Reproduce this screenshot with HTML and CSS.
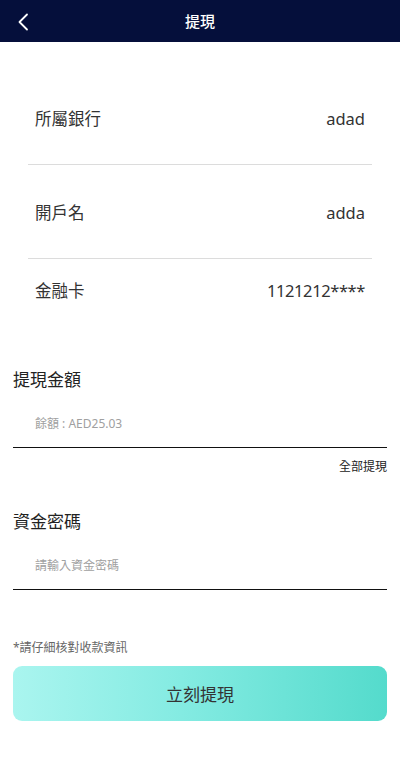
FILE: index.html
```html
<!DOCTYPE html>
<html lang="zh-Hant">
<head>
<meta charset="utf-8">
<meta name="viewport" content="width=device-width, initial-scale=1">
<title>提現</title>
<link rel="stylesheet" href="styles.css">
</head>
<body>
<header class="topbar">
  <span class="back">
    <svg width="12" height="18" viewBox="0 0 12 18" fill="none"><path d="M10 1.5 L2.5 9 L10 16.5" stroke="#ffffff" stroke-width="1.8" stroke-linecap="round" stroke-linejoin="round"/></svg>
  </span>
  <h1 class="title">提現</h1>
  <span class="spacer"></span>
</header>

<section class="info">
  <div class="row row-1"><span class="key">所屬銀行</span><span class="val">adad</span></div>
  <div class="row row-2"><span class="key">開戶名</span><span class="val">adda</span></div>
  <div class="row row-3"><span class="key">金融卡</span><span class="val card">1121212****</span></div>
</section>

<section class="form">
  <div class="label label-first">提現金額</div>
  <div class="field"><span class="placeholder">餘額 : AED25.03</span></div>
  <div class="all">全部提現</div>

  <div class="label label-second">資金密碼</div>
  <div class="field"><span class="placeholder">請輸入資金密碼</span></div>

  <div class="note">*請仔細核對收款資訊</div>
  <button class="submit" type="button">立刻提現</button>
</section>
</body>
</html>
```

FILE: styles.css
```css
* { box-sizing: border-box; }
html, body { margin: 0; padding: 0; background: #ffffff; }
body {
  width: 400px;
  font-family: "Noto Sans", "Noto Sans CJK TC", sans-serif;
  color: #333333;
}

.topbar {
  height: 42px;
  background: #050f3b;
  display: grid;
  grid-template-columns: 48px 1fr 48px;
  align-items: center;
}
.back {
  display: flex;
  align-items: center;
  padding-left: 17px;
  padding-top: 1px;
}
.title {
  margin: 0;
  text-align: center;
  font-size: 15px;
  font-weight: 500;
  color: #ffffff;
  line-height: 20px;
}

.info {
  padding: 32px 28px 0;
}
.row {
  display: flex;
  justify-content: space-between;
  align-items: center;
  padding: 0 7px;
  font-size: 16.5px;
  line-height: 24px;
  color: #333333;
}
.row-1 { height: 91px; border-bottom: 1px solid #dcdcdc; }
.row-2 { height: 94px; border-bottom: 1px solid #dcdcdc; padding-top: 2px; }
.row-3 { height: 64px; }
.val { color: #333333; }
.card { letter-spacing: -0.4px; }

.form {
  padding: 0 13px;
}
.label {
  font-size: 17px;
  line-height: 24px;
  color: #222222;
}
.label-first { margin-top: 45px; }
.label-second { margin-top: 35px; }
.field {
  margin-top: 8px;
  height: 48px;
  border-bottom: 1px solid #111111;
  display: flex;
  align-items: center;
  padding-left: 22px;
  padding-top: 1px;
}
.placeholder {
  font-size: 12px;
  color: #a0a0a0;
  line-height: 16px;
}
.all {
  margin-top: 11px;
  text-align: right;
  font-size: 12px;
  line-height: 16px;
  color: #222222;
}
.note {
  margin-top: 50px;
  font-size: 12px;
  line-height: 16px;
  color: #666666;
}
.submit {
  display: block;
  width: 100%;
  height: 55px;
  margin-top: 10px;
  border: 0;
  border-radius: 9px;
  background: linear-gradient(90deg, #aaf5ef 0%, #84ebe2 45%, #54dbcc 100%);
  font-family: "Noto Sans", "Noto Sans CJK TC", sans-serif;
  font-size: 17px;
  color: #333333;
  cursor: pointer;
}
```
